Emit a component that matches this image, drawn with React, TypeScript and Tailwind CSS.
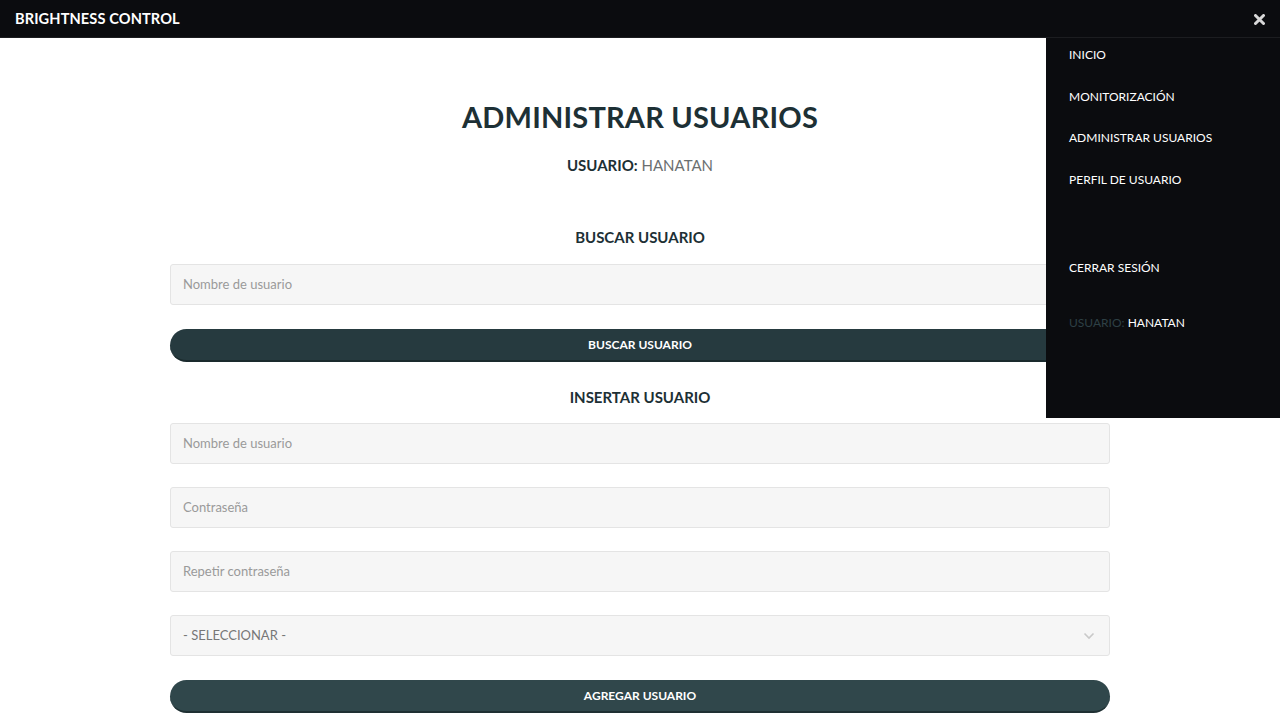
import React from "react";

const font = { fontFamily: "Lato, 'Open Sans', sans-serif" };

function Field({ placeholder }: { placeholder: string }) {
  return (
    <div className="h-[41px] w-full rounded-[3px] border border-[#e4e4e4] bg-[#f6f6f6] flex items-center pl-[12px] text-[13px] text-[#9a9a9a]">
      {placeholder}
    </div>
  );
}

export default function App() {
  return (
    <div className="relative w-[1280px] h-[720px] overflow-hidden bg-white" style={font}>
      <div className="h-[38px] bg-[#0b0c0f] flex items-center justify-between pl-[15px] pr-[15px] border-b border-[#1c1d20]">
        <span className="text-white font-bold text-[14.6px] tracking-[0.1px]">BRIGHTNESS CONTROL</span>
        <svg width="11" height="11" viewBox="0 0 11 11" className="mt-[1px]">
          <path d="M1.5 1.5 L9.5 9.5 M9.5 1.5 L1.5 9.5" stroke="#d8d8d8" strokeWidth="3" strokeLinecap="round" />
        </svg>
      </div>

      <div className="flex flex-col items-center">
        <h1 className="mt-[61px] text-[29px] leading-[36px] font-bold text-[#1d3035] tracking-[0.2px]">ADMINISTRAR USUARIOS</h1>
        <p className="mt-[20px] text-[15px] leading-[20px] text-[#1d3035]">
          <span className="font-bold">USUARIO:</span> <span className="text-[#6b6f70]">HANATAN</span>
        </p>

        <div className="w-[940px] flex flex-col">
          <h2 className="mt-[52px] text-center text-[15px] leading-[20px] font-bold text-[#1d3035]">BUSCAR USUARIO</h2>
          <div className="mt-[17px]">
            <Field placeholder="Nombre de usuario" />
          </div>
          <button className="mt-[24px] h-[33px] w-full rounded-full bg-[#263a3f] border-b-2 border-[#1a2a2d] text-white text-[12px] font-bold">
            BUSCAR USUARIO
          </button>

          <h2 className="mt-[25px] text-center text-[15px] leading-[20px] font-bold text-[#1d3035]">INSERTAR USUARIO</h2>
          <div className="mt-[16px] flex flex-col gap-[23px]">
            <Field placeholder="Nombre de usuario" />
            <Field placeholder="Contraseña" />
            <Field placeholder="Repetir contraseña" />
            <div className="h-[41px] w-full rounded-[3px] border border-[#e4e4e4] bg-[#f6f6f6] flex items-center justify-between pl-[12px] pr-[14px] text-[13px] text-[#777]">
              <span>- SELECCIONAR -</span>
              <svg width="12" height="8" viewBox="0 0 12 8">
                <path d="M1.5 1.5 L6 6 L10.5 1.5" stroke="#c9c9c9" strokeWidth="1.6" fill="none" />
              </svg>
            </div>
          </div>
          <button className="mt-[24px] h-[33px] w-full rounded-full bg-[#30474b] border-b-2 border-[#1f3033] text-white text-[12px] font-bold">
            AGREGAR USUARIO
          </button>
        </div>
      </div>

      <div className="absolute right-0 top-[38px] w-[234px] h-[380px] bg-[#0b0c0f] pl-[23px] pt-[7px] text-[12px] leading-[20px] text-white">
        <div>INICIO</div>
        <div className="mt-[22px]">MONITORIZACIÓN</div>
        <div className="mt-[21px]">ADMINISTRAR USUARIOS</div>
        <div className="mt-[22px]">PERFIL DE USUARIO</div>
        <div className="mt-[68px]">CERRAR SESIÓN</div>
        <div className="mt-[35px]">
          <span className="text-[#2e4045]">USUARIO:</span> HANATAN
        </div>
      </div>
    </div>
  );
}
